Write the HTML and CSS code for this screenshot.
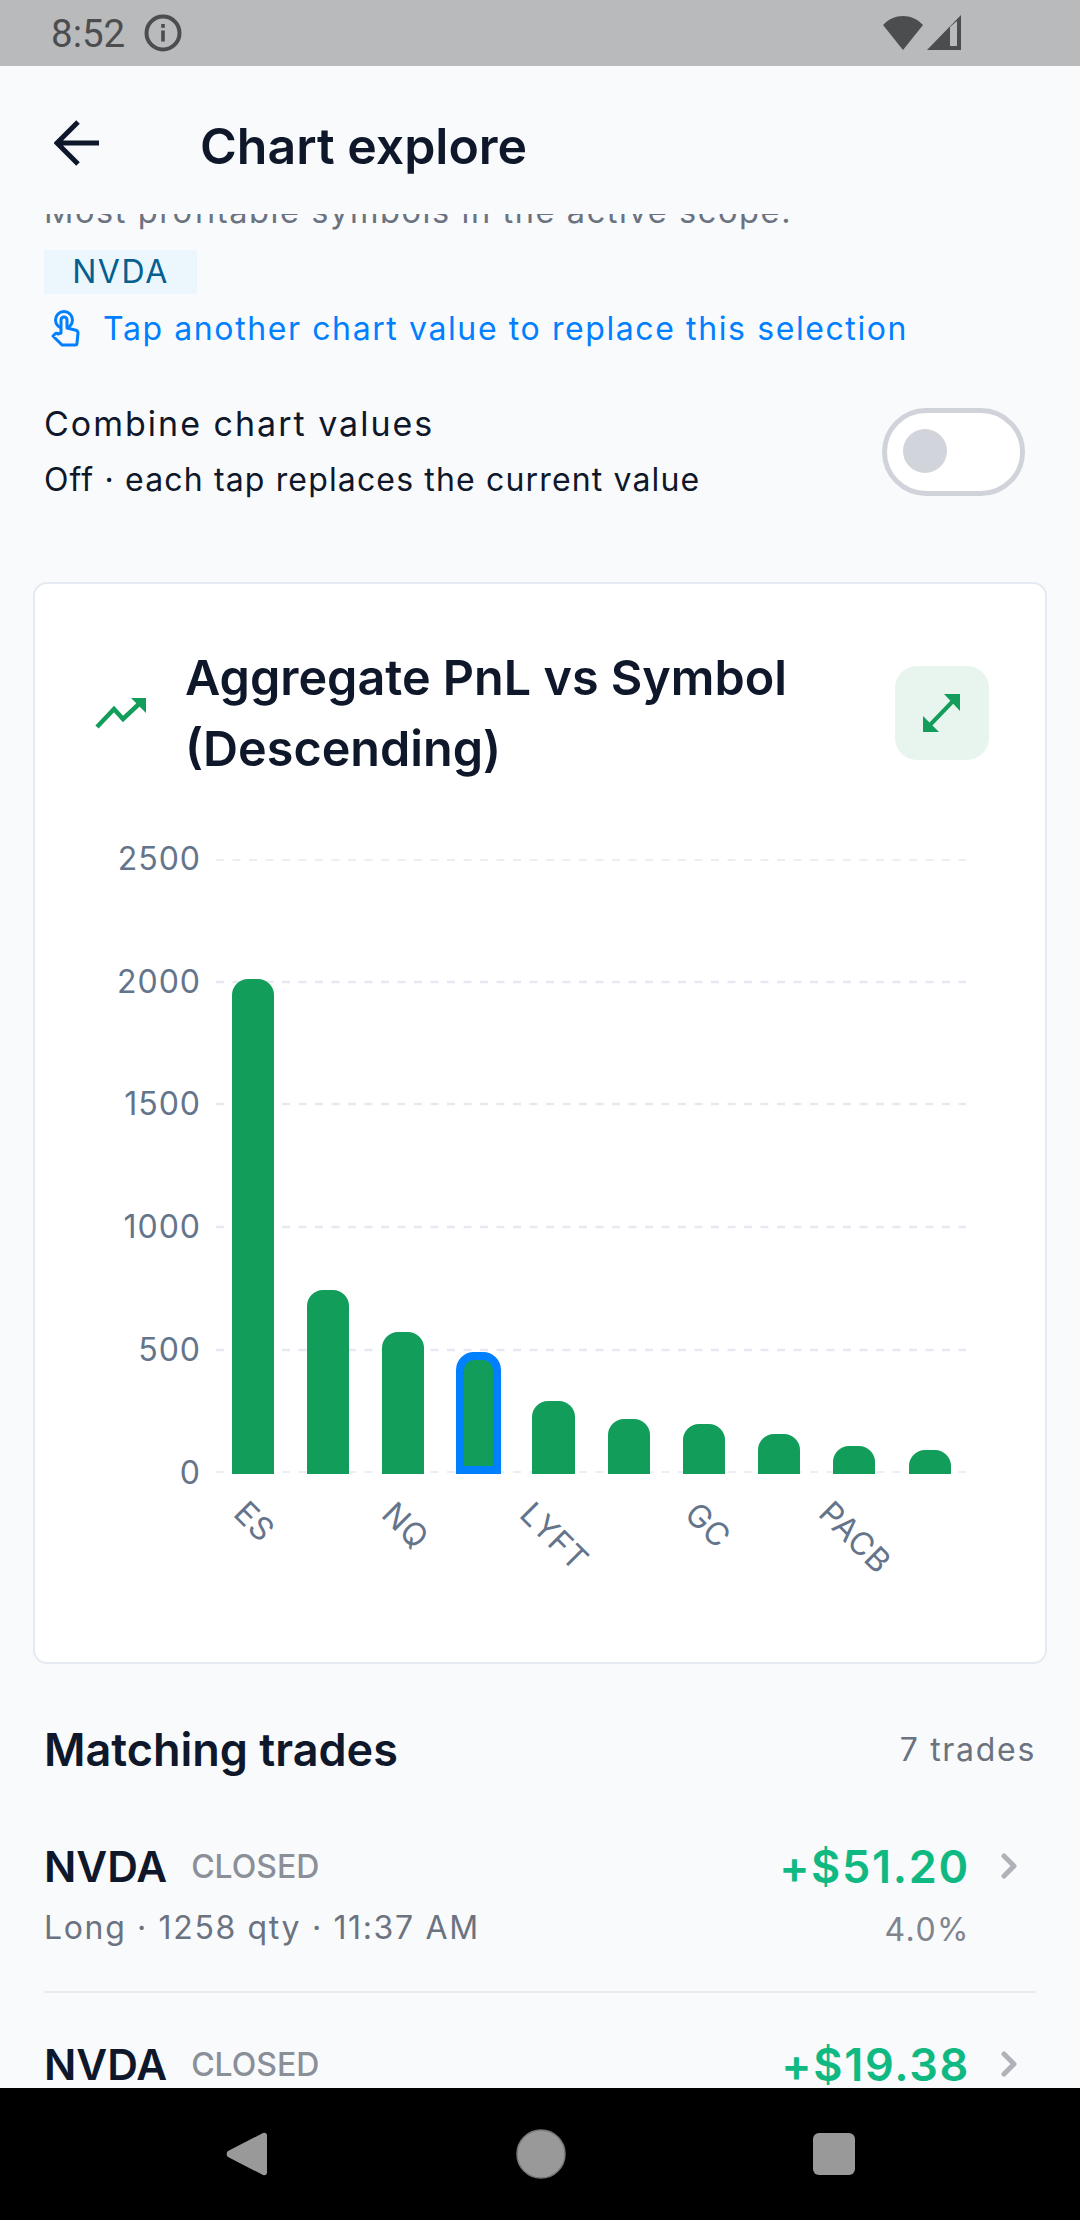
FILE: index.html
```html
<!DOCTYPE html>
<html lang="en">
<head>
    <meta charset="UTF-8">
    <meta name="viewport" content="width=device-width, initial-scale=1.0">
    <title>Chart explore</title>
    <link rel="stylesheet" href="styles.css">
</head>
<body>
<div class="screen">

    <!-- Android status bar -->
    <div class="status-bar">
        <span class="status-time">8:52</span>
        <svg class="status-info" width="38" height="38" viewBox="0 0 38 38">
            <circle cx="19" cy="19" r="16.5" fill="none" stroke="#4c4d4f" stroke-width="4"/>
            <rect x="17.2" y="16.5" width="3.6" height="11" fill="#4c4d4f"/>
            <rect x="17.2" y="10" width="3.6" height="3.8" fill="#4c4d4f"/>
        </svg>
        <span class="status-spacer"></span>
        <svg width="80" height="36" viewBox="0 0 80 36">
            <path d="M1 10 C 12 -2, 30 -2, 41 10 L 21 35 Z" fill="#4c4d4f"/>
            <path d="M45 35 L79 0 V35 Z M68 12 V31 H75 V6 Z" fill="#4c4d4f" fill-rule="evenodd"/>
        </svg>
    </div>

    <header class="top-bar">
        <svg class="back-arrow" width="46" height="46" viewBox="0 0 46 46">
            <path d="M45 23 H4 M24 2 L3 23 L24 44" fill="none" stroke="#0f172a" stroke-width="5"/>
        </svg>
        <h1>Chart explore</h1>
    </header>

    <main class="content">
        <div class="scroll-inner">
            <p class="scope-text">Most profitable symbols in the active scope.</p>
            <span class="chip">NVDA</span>
            <div class="hint">
                <svg width="30" height="38" viewBox="0 0 30 38">
                    <circle cx="14" cy="10" r="8.5" fill="none" stroke="#007fff" stroke-width="3"/>
                    <path d="M11 23 V10 a3 3 0 0 1 6 0 V18 L25 20 a3 3 0 0 1 3 3 L27 33 a2 2 0 0 1 -2 2 H12 L3 26 L5 24 a2 2 0 0 1 3 0 Z" fill="#f9fafc" stroke="#007fff" stroke-width="3" stroke-linejoin="round"/>
                </svg>
                <span>Tap another chart value to replace this selection</span>
            </div>

            <div class="combine-row">
                <div>
                    <div class="combine-title">Combine chart values</div>
                    <div class="combine-sub">Off · each tap replaces the current value</div>
                </div>
                <div class="toggle"><div class="toggle-knob"></div></div>
            </div>

            <section class="chart-card">
                <div class="chart-head">
                    <svg class="trend-icon" width="52" height="32" viewBox="0 0 52 32">
                        <path d="M2 30 L19 12 L28 22 L45 6" fill="none" stroke="#129e5a" stroke-width="4.5"/>
                        <path d="M36 1 H51 V16 Z" fill="#129e5a"/>
                    </svg>
                    <h2>Aggregate PnL vs Symbol (Descending)</h2>
                    <div class="expand-btn">
                        <svg width="38" height="38" viewBox="0 0 38 38">
                            <path d="M6 32 L31 6" fill="none" stroke="#129e5a" stroke-width="4"/>
                            <path d="M21 0 H37 V17 Z M0 22 V38 H16 Z" fill="#129e5a"/>
                        </svg>
                    </div>
                </div>

                <svg class="bar-chart" width="1010" height="800" viewBox="35 840 1010 800">
                    <g class="grid">
                        <line class="grid-thin" x1="216" x2="966" y1="861" y2="861"/>
                        <line x1="216" x2="966" y1="983" y2="983"/>
                        <line x1="216" x2="966" y1="1105" y2="1105"/>
                        <line x1="216" x2="966" y1="1228" y2="1228"/>
                        <line x1="216" x2="966" y1="1351" y2="1351"/>
                        <line class="grid-thin" x1="216" x2="966" y1="1473" y2="1473"/>
                    </g>
                    <g class="y-labels">
                        <text x="201" y="871">2500</text>
                        <text x="201" y="994">2000</text>
                        <text x="201" y="1116">1500</text>
                        <text x="201" y="1239">1000</text>
                        <text x="201" y="1362">500</text>
                        <text x="201" y="1485">0</text>
                    </g>
                    <g class="bars">
                        <path d="M232 1475 V996 a16 16 0 0 1 16 -16 h10 a16 16 0 0 1 16 16 V1475 Z"/>
                        <path d="M307 1475 V1307 a16 16 0 0 1 16 -16 h10 a16 16 0 0 1 16 16 V1475 Z"/>
                        <path d="M382 1475 V1349 a16 16 0 0 1 16 -16 h10 a16 16 0 0 1 16 16 V1475 Z"/>
                        <path class="bar-selected" d="M460 1471 V1371 a14 14 0 0 1 14 -14 h9 a14 14 0 0 1 14 14 V1471 Z"/>
                        <path d="M532 1475 V1418 a16 16 0 0 1 16 -16 h11 a16 16 0 0 1 16 16 V1475 Z"/>
                        <path d="M608 1475 V1436 a16 16 0 0 1 16 -16 h10 a16 16 0 0 1 16 16 V1475 Z"/>
                        <path d="M683 1475 V1441 a16 16 0 0 1 16 -16 h10 a16 16 0 0 1 16 16 V1475 Z"/>
                        <path d="M758 1475 V1451 a16 16 0 0 1 16 -16 h10 a16 16 0 0 1 16 16 V1475 Z"/>
                        <path d="M833 1475 V1463 a16 16 0 0 1 16 -16 h10 a16 16 0 0 1 16 16 V1475 Z"/>
                        <path d="M909 1475 V1467 a16 16 0 0 1 16 -16 h10 a16 16 0 0 1 16 16 V1475 Z"/>
                    </g>
                    <g class="x-labels">
                        <text transform="translate(232 1516) rotate(45)">ES</text>
                        <text transform="translate(380 1517) rotate(45)">NQ</text>
                        <text transform="translate(518 1517) rotate(45)">LYFT</text>
                        <text transform="translate(683 1517) rotate(45)">GC</text>
                        <text transform="translate(817 1516) rotate(45)">PACB</text>
                    </g>
                </svg>
            </section>

            <div class="trades-head">
                <h3>Matching trades</h3>
                <span class="trades-count">7 trades</span>
            </div>

            <div class="trade">
                <div class="trade-main">
                    <div class="trade-line">
                        <span class="trade-symbol">NVDA</span>
                        <span class="trade-status">CLOSED</span>
                    </div>
                    <div class="trade-meta">Long · 1258 qty · 11:37 AM</div>
                </div>
                <div class="trade-right">
                    <div class="trade-pnl">+$51.20</div>
                    <div class="trade-pct">4.0%</div>
                </div>
                <svg class="chevron" width="18" height="26" viewBox="0 0 18 26">
                    <path d="M3 3 L13 13 L3 23" fill="none" stroke="#b0b2b8" stroke-width="5" stroke-linecap="round" stroke-linejoin="round"/>
                </svg>
            </div>

            <div class="trade">
                <div class="trade-main">
                    <div class="trade-line">
                        <span class="trade-symbol">NVDA</span>
                        <span class="trade-status">CLOSED</span>
                    </div>
                </div>
                <div class="trade-right">
                    <div class="trade-pnl">+$19.38</div>
                </div>
                <svg class="chevron" width="18" height="26" viewBox="0 0 18 26">
                    <path d="M3 3 L13 13 L3 23" fill="none" stroke="#b0b2b8" stroke-width="5" stroke-linecap="round" stroke-linejoin="round"/>
                </svg>
            </div>
        </div>
    </main>

    <!-- Android navigation bar -->
    <div class="nav-bar">
        <svg width="44" height="48" viewBox="0 0 44 48">
            <path d="M38 3 a3 3 0 0 1 4 2 V43 a3 3 0 0 1 -4 2 L3 27 a4 4 0 0 1 0 -6 Z" fill="#999"/>
        </svg>
        <svg width="50" height="50" viewBox="0 0 50 50">
            <circle cx="25" cy="25" r="24" fill="#999" stroke="#777" stroke-width="1.5"/>
        </svg>
        <svg width="42" height="42" viewBox="0 0 42 42">
            <rect width="42" height="42" rx="6" fill="#999"/>
        </svg>
    </div>
</div>
</body>
</html>
```

FILE: styles.css
```css
* {
    box-sizing: border-box;
}

body {
    margin: 0;
    font-family: 'Inter', 'Liberation Sans', sans-serif;
    background-color: #f9fafc;
    color: #0f172a;
}

h1, h2, h3, p {
    margin: 0;
}

.screen {
    display: flex;
    flex-direction: column;
    width: 1080px;
    height: 2220px;
    overflow: hidden;
}

/* Status bar */

.status-bar {
    display: flex;
    align-items: center;
    flex: none;
    height: 66px;
    padding: 0 118px 0 51px;
    background-color: #b9babc;
}

.status-time {
    font-family: 'Roboto', sans-serif;
    font-size: 38.5px;
    color: #4c4d4f;
    margin-right: 19px;
}

.status-spacer {
    flex: 1;
}

/* Top bar */

.top-bar {
    display: flex;
    align-items: center;
    flex: none;
    height: 148px;
    padding: 6px 0 0 54px;
    background-color: #f9fafc;
    position: relative;
    z-index: 1;
}

.back-arrow {
    margin-right: 100px;
}

.top-bar h1 {
    margin-top: 6px;
    font-size: 50px;
    font-weight: 600;
}

/* Scrolling content */

.content {
    flex: 1;
    min-height: 0;
    overflow: hidden;
}

.scroll-inner {
    margin-top: -20px;
    padding: 0 44px 0 44px;
}

.scope-text {
    height: 36px;
    line-height: 36px;
    font-size: 32.5px;
    letter-spacing: 1.6px;
    color: #6b7280;
}

.chip {
    display: block;
    width: 153px;
    height: 44px;
    margin-top: 20px;
    line-height: 44px;
    text-align: center;
    font-size: 32px;
    letter-spacing: 1.6px;
    color: #055f8f;
    background-color: #ebf6fd;
}

.hint {
    display: flex;
    align-items: center;
    gap: 23px;
    margin-top: 15px;
    padding-left: 6px;
    font-size: 32px;
    letter-spacing: 1.6px;
    color: #007fff;
}

.combine-row {
    display: flex;
    justify-content: space-between;
    align-items: center;
    margin: 56px 11px 0 0;
}

.combine-title {
    font-size: 34px;
    letter-spacing: 2px;
    line-height: 40px;
}

.combine-sub {
    font-size: 32px;
    letter-spacing: 1.15px;
    line-height: 40px;
    margin-top: 16px;
}

.toggle {
    width: 143px;
    height: 88px;
    padding: 16px;
    border: 5px solid #d1d3da;
    border-radius: 44px;
    background-color: #fff;
}

.toggle-knob {
    width: 44px;
    height: 44px;
    border-radius: 50%;
    background-color: #d1d5db;
}

/* Chart card */

.chart-card {
    margin: 82px -11px 0;
    height: 1082px;
    border: 2px solid #e5e9f1;
    border-radius: 14px;
    background-color: #fff;
}

.chart-head {
    display: flex;
    align-items: center;
    padding: 58px 56px 0 60px;
}

.trend-icon {
    flex: none;
    margin-right: 38px;
}

.chart-head h2 {
    flex: 1;
    font-size: 48.5px;
    font-weight: 600;
    line-height: 71px;
}

.expand-btn {
    display: flex;
    align-items: center;
    justify-content: center;
    flex: none;
    width: 94px;
    height: 94px;
    border-radius: 22px;
    background-color: #e8f5ee;
}

.bar-chart {
    display: block;
    margin-top: 55px;
}

.grid line {
    stroke: #e5e9f1;
    stroke-width: 2.5;
    stroke-dasharray: 8 8.5;
}

.grid .grid-thin {
    stroke-width: 1.5;
}

.y-labels text {
    font-size: 32px;
    letter-spacing: 1px;
    text-anchor: end;
    fill: #64748b;
}

.x-labels text {
    font-size: 32px;
    letter-spacing: 0.5px;
    fill: #64748b;
}

.bars path {
    fill: #129e5a;
}

.bars .bar-selected {
    stroke: #007fff;
    stroke-width: 8;
}

/* Matching trades */

.trades-head {
    display: flex;
    justify-content: space-between;
    align-items: center;
    margin: 58px 0 18px 0;
}

.trades-head h3 {
    font-size: 45px;
    font-weight: 600;
}

.trades-count {
    font-size: 32px;
    letter-spacing: 1.7px;
    color: #6b7280;
}

.trade {
    display: flex;
    height: 198px;
    padding-top: 44px;
    border-bottom: 2px solid #e9ebef;
}

.trade:last-child {
    border-bottom: none;
}

.trade-main {
    flex: 1;
}

.trade-line {
    display: flex;
    align-items: center;
    gap: 24px;
    height: 54px;
}

.trade-symbol {
    font-size: 42.5px;
    font-weight: 600;
}

.trade-status {
    font-size: 32px;
    font-weight: 500;
    color: #8a8f98;
}

.trade-meta {
    margin-top: 15px;
    font-size: 32px;
    letter-spacing: 1.65px;
    color: #6b7280;
}

.trade-right {
    text-align: right;
}

.trade-pnl {
    font-size: 45px;
    font-weight: 600;
    letter-spacing: 1.7px;
    color: #10b981;
}

.trade-pct {
    margin-top: 16px;
    font-size: 32px;
    letter-spacing: 1.5px;
    color: #80848d;
}

.chevron {
    margin: 14px 17px 0 31px;
}

/* Navigation bar */

.nav-bar {
    display: flex;
    align-items: center;
    flex: none;
    justify-content: space-between;
    height: 132px;
    padding: 0 225px;
    background-color: #000;
}
```
